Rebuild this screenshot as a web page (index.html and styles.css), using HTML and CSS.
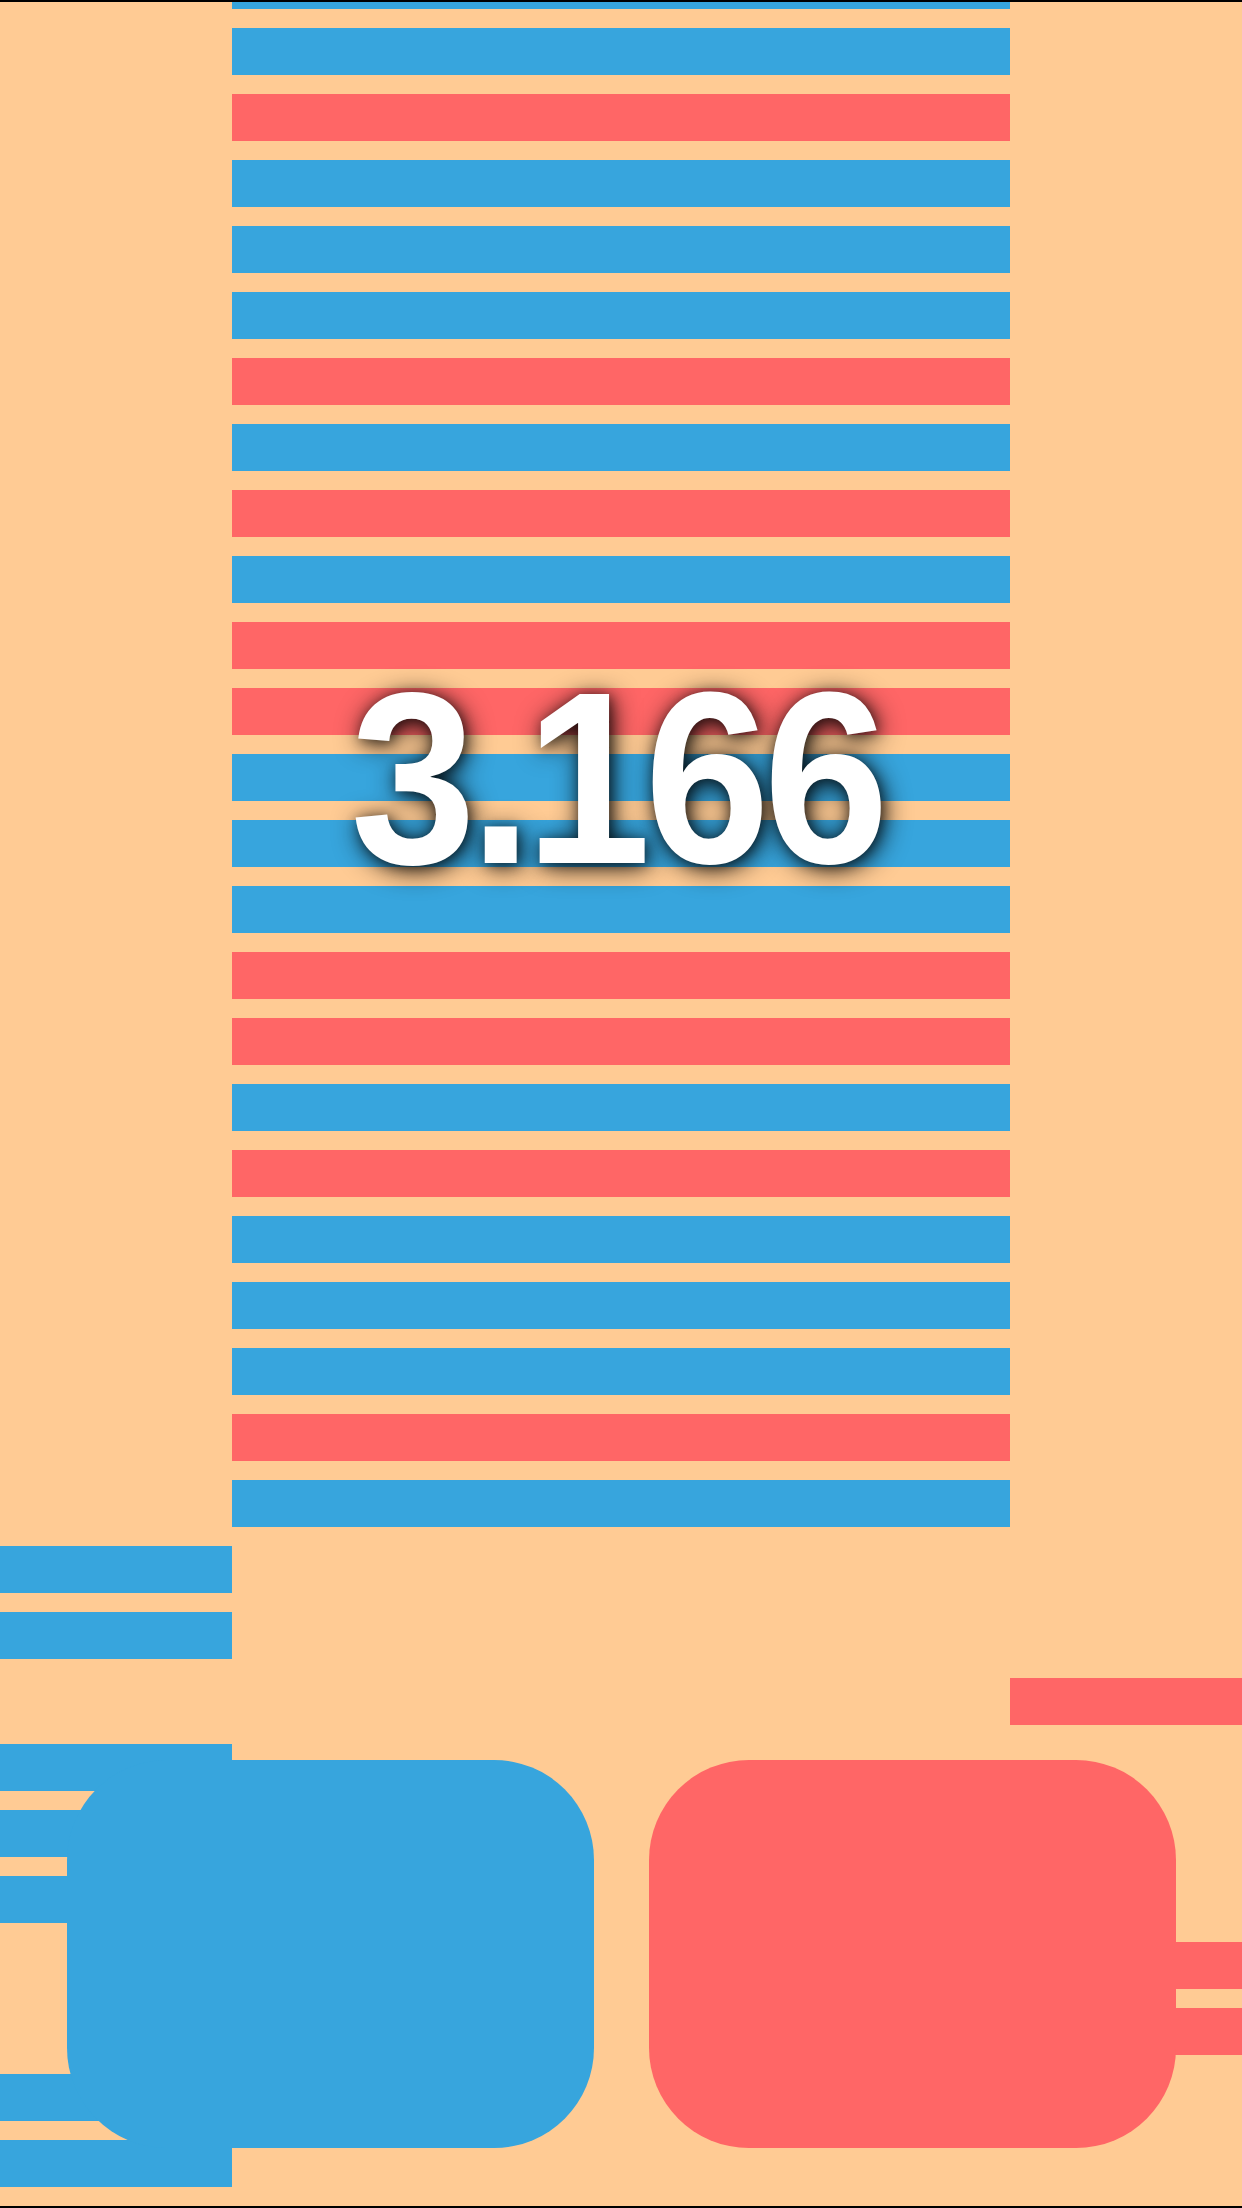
FILE: index.html
```html
<!DOCTYPE html>
<html>
  <head>
    <title>Stack Drop</title>
    <link rel="stylesheet" href="styles.css">
  </head>

  <body>
    <div id="game">
        <div id="board">
            <div class="row"><span class="bar mid blue"></span></div>
            <div class="row"><span class="bar mid blue"></span></div>
            <div class="row"><span class="bar mid red"></span></div>
            <div class="row"><span class="bar mid blue"></span></div>
            <div class="row"><span class="bar mid blue"></span></div>
            <div class="row"><span class="bar mid blue"></span></div>
            <div class="row"><span class="bar mid red"></span></div>
            <div class="row"><span class="bar mid blue"></span></div>
            <div class="row"><span class="bar mid red"></span></div>
            <div class="row"><span class="bar mid blue"></span></div>
            <div class="row"><span class="bar mid red"></span></div>
            <div class="row"><span class="bar mid red"></span></div>
            <div class="row"><span class="bar mid blue"></span></div>
            <div class="row"><span class="bar mid blue"></span></div>
            <div class="row"><span class="bar mid blue"></span></div>
            <div class="row"><span class="bar mid red"></span></div>
            <div class="row"><span class="bar mid red"></span></div>
            <div class="row"><span class="bar mid blue"></span></div>
            <div class="row"><span class="bar mid red"></span></div>
            <div class="row"><span class="bar mid blue"></span></div>
            <div class="row"><span class="bar mid blue"></span></div>
            <div class="row"><span class="bar mid blue"></span></div>
            <div class="row"><span class="bar mid red"></span></div>
            <div class="row"><span class="bar mid blue"></span></div>
            <!-- bars that slid out of the column -->
            <div class="row"><span class="bar left blue"></span></div>
            <div class="row"><span class="bar left blue"></span></div>
            <div class="row"><span class="bar right red"></span></div>
            <div class="row"><span class="bar left blue"></span></div>
            <div class="row"><span class="bar left blue"></span></div>
            <div class="row"><span class="bar left blue"></span></div>
            <div class="row"><span class="bar right red"></span></div>
            <div class="row"><span class="bar right red"></span></div>
            <div class="row"><span class="bar left blue"></span></div>
            <div class="row"><span class="bar left blue"></span></div>
        </div>

        <div id="score">3.166</div>

        <div id="controls">
            <button class="pad blue" type="button" aria-label="Blue"></button>
            <button class="pad red" type="button" aria-label="Red"></button>
        </div>
    </div>
  </body>
</html>
```

FILE: styles.css
```css
body {
  margin: 0;
  background-color: #ffcb94;
  font-family: 'Liberation Sans', Arial, sans-serif;
}

#game {
  position: relative;
  width: 1242px;
  height: 2208px;
  box-sizing: border-box;
  border-top: 2px solid #000;
  border-bottom: 2px solid #000;
  overflow: hidden;
  background-color: #ffcb94;
}

#board {
  display: flex;
  flex-direction: column;
  gap: 19px;
  margin-top: -40px;
}

.row {
  display: grid;
  grid-template-columns: 232px 778px 232px;
  height: 47px;
}

.bar {
  display: block;
}
.bar.left {
  grid-column: 1;
}
.bar.mid {
  grid-column: 2;
}
.bar.right {
  grid-column: 3;
}

.blue {
  background-color: #37a5dd;
}
.red {
  background-color: #ff6666;
}

/* score floats over the column */
#score {
  position: absolute;
  top: 654px;
  left: 0;
  right: 0;
  padding-right: 10px;
  text-align: center;
  font-size: 245px;
  font-weight: bold;
  line-height: 1;
  letter-spacing: -7px;
  color: #fff;
  transform: scaleX(0.92);
  text-shadow: 3px 4px 28px rgba(0, 0, 0, 0.9), 2px 2px 12px rgba(0, 0, 0, 0.45);
}

#controls {
  position: absolute;
  left: 0;
  right: 0;
  bottom: 58px;
  display: flex;
  justify-content: center;
  gap: 55px;
}

.pad {
  width: 527px;
  height: 388px;
  padding: 0;
  border: none;
  border-radius: 100px;
}
```
